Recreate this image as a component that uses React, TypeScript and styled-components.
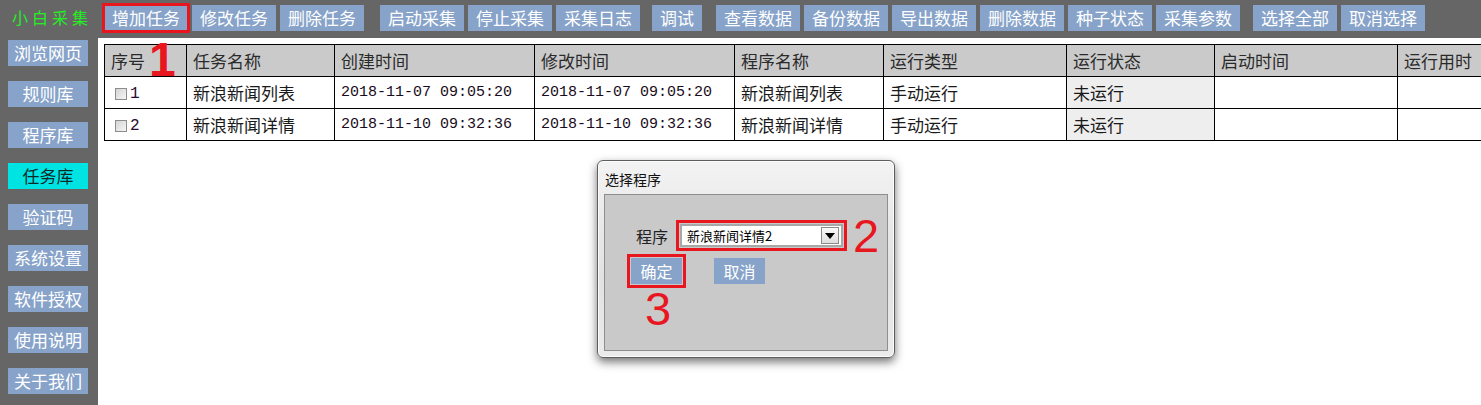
import React from "react";
import styled, { createGlobalStyle } from "styled-components";

const GlobalStyle = createGlobalStyle`
  html, body { margin: 0; padding: 0; background: #666666; }
  body { font-family: "Noto Sans CJK SC", "Liberation Sans", sans-serif; }
  * { box-sizing: border-box; }
`;

const CJK = `"Noto Sans CJK SC", "Liberation Sans", sans-serif`;
const RED = "#e8161f";

const Page = styled.div`
  position: relative;
  width: 1481px;
  height: 405px;
  display: grid;
  grid-template-columns: 98px 1fr;
  grid-template-rows: 38px 1fr;
  background: #666666;
  overflow: hidden;
`;

const Logo = styled.div`
  display: flex;
  align-items: center;
  padding: 0 0 4px 12px;
  color: #22f022;
  font-family: ${CJK};
  font-size: 16px;
  letter-spacing: 4px;
  white-space: nowrap;
`;

const Toolbar = styled.div`
  display: flex;
  align-items: flex-start;
  padding: 5px 0 0 6px;
`;

const Group = styled.div<{ $ml: number }>`
  display: flex;
  gap: 4px;
  margin-left: ${(p) => p.$ml}px;
`;

const BlueButton = styled.button<{ $marked?: boolean; $w?: number }>`
  height: 26px;
  width: ${(p) => p.$w ?? 84}px;
  padding: 0;
  border: none;
  background: #87a3c9;
  color: #ffffff;
  font-family: ${CJK};
  font-size: 17px;
  line-height: 26px;
  text-align: center;
  white-space: nowrap;
  cursor: pointer;
  outline: ${(p) => (p.$marked ? `3px solid ${RED}` : "none")};
  outline-offset: -1px;
`;

const Sidebar = styled.nav`
  display: flex;
  flex-direction: column;
  align-items: flex-start;
  gap: 15px;
  padding: 2px 0 0 8px;
`;

const SideButton = styled.button<{ $active?: boolean }>`
  width: 80px;
  height: 26px;
  padding: 0;
  border: none;
  background: ${(p) => (p.$active ? "#00e3e3" : "#87a3c9")};
  color: ${(p) => (p.$active ? "#0c2a2a" : "#ffffff")};
  font-family: ${CJK};
  font-size: 17px;
  line-height: 26px;
  text-align: center;
  white-space: nowrap;
  cursor: pointer;
`;

const Main = styled.main`
  position: relative;
  background: #ffffff;
  padding: 6px 0 0 6px;
  overflow: hidden;
`;

const Table = styled.table`
  border-collapse: collapse;
  table-layout: fixed;
  width: 1476px;
  font-family: ${CJK};
  font-size: 17px;
  color: #1a1a1a;
`;

const HeadCell = styled.th`
  height: 32px;
  padding: 0 0 0 6px;
  border: 1px solid #000;
  background: #cacaca;
  font-weight: 400;
  text-align: left;
  white-space: nowrap;
  color: #2a2a2a;
`;

const Cell = styled.td<{ $mono?: boolean; $shade?: boolean }>`
  height: 32px;
  padding: 0 0 0 6px;
  border: 1px solid #000;
  background: ${(p) => (p.$shade ? "#eeeeee" : "#ffffff")};
  white-space: nowrap;
  font-family: ${(p) => (p.$mono ? `"Liberation Mono", monospace` : CJK)};
  font-size: ${(p) => (p.$mono ? "15px" : "17px")};
  color: ${(p) => (p.$mono ? "#1a0a20" : "#1a1a1a")};
`;

const IndexCell = styled.span`
  display: inline-flex;
  align-items: center;
  font-family: "Liberation Mono", monospace;
  font-size: 16px;
  color: #2a0a30;
`;

const Check = styled.span`
  display: inline-block;
  width: 12px;
  height: 12px;
  margin: 0 3px 0 4px;
  border: 1px solid #8c8c8c;
  background: linear-gradient(135deg, #d4d4d4 0%, #f6f6f6 100%);
`;

const Annotation = styled.span<{ $size: number }>`
  position: absolute;
  color: ${RED};
  font-family: "Liberation Sans", sans-serif;
  font-size: ${(p) => p.$size}px;
  line-height: 0.75;
  pointer-events: none;
  z-index: 2;
`;

const StepOne = styled(Annotation)`
  left: 149px;
  top: 42px;
  font-weight: 700;
`;

const Dialog = styled.div`
  position: absolute;
  left: 499px;
  top: 122px;
  width: 298px;
  height: 198px;
  display: flex;
  flex-direction: column;
  border: 1px solid #5e5e5e;
  border-radius: 6px;
  background: linear-gradient(180deg, #f3f3f3 0%, #e9e9e9 30%, #e2e2e2 60%, #ebebeb 100%);
  box-shadow: 0 4px 10px rgba(0, 0, 0, 0.55), inset 0 0 0 1px rgba(255, 255, 255, 0.8);
  padding: 0 6px 6px 6px;
`;

const DialogTitle = styled.div`
  height: 33px;
  display: flex;
  align-items: center;
  padding: 2px 0 0 1px;
  font-family: ${CJK};
  font-size: 14px;
  color: #111;
`;

const DialogBody = styled.div`
  flex: 1;
  display: flex;
  flex-direction: column;
  gap: 3px;
  padding: 25px 0 0 0;
  background: #c9c9c9;
  border: 1px solid #8e8e8e;
`;

const FieldRow = styled.div`
  display: flex;
  align-items: center;
  padding-left: 31px;
`;

const FieldLabel = styled.span`
  width: 40px;
  font-family: ${CJK};
  font-size: 16px;
  color: #222;
`;

const Marker = styled.div`
  position: relative;
  display: flex;
  padding: 1px;
  border: 3px solid ${RED};
`;

const SelectBox = styled.div`
  width: 163px;
  height: 23px;
  display: flex;
  align-items: center;
  justify-content: space-between;
  padding: 0 2px 0 5px;
  background: #ffffff;
  border: 2px solid #a8a8a8;
  font-family: ${CJK};
  font-size: 13px;
  color: #000;
`;

const DropButton = styled.span`
  width: 18px;
  height: 17px;
  display: flex;
  align-items: center;
  justify-content: center;
  border: 1px solid #8a8a8a;
  background: linear-gradient(180deg, #fafafa, #dedede);
`;

const StepTwo = styled(Annotation)`
  left: calc(100% + 9px);
  top: -5px;
`;

const ButtonRow = styled.div`
  display: flex;
  align-items: center;
  gap: 28px;
  padding-left: 22px;
`;

const StepThree = styled(Annotation)`
  left: 15px;
  top: calc(100% + 6px);
`;

const DialogButton = styled(BlueButton)`
  width: 51px;
  font-size: 16px;
`;

const columns = [82, 148, 200, 200, 149, 183, 148, 183, 183];
const headers = ["序号", "任务名称", "创建时间", "修改时间", "程序名称", "运行类型", "运行状态", "启动时间", "运行用时"];

const rows = [
  { id: "1", name: "新浪新闻列表", created: "2018-11-07 09:05:20", modified: "2018-11-07 09:05:20", program: "新浪新闻列表" },
  { id: "2", name: "新浪新闻详情", created: "2018-11-10 09:32:36", modified: "2018-11-10 09:32:36", program: "新浪新闻详情" },
];

const groups: { ml: number; items: { label: string; w?: number; marked?: boolean }[] }[] = [
  { ml: 0, items: [{ label: "增加任务", marked: true }, { label: "修改任务" }, { label: "删除任务" }] },
  { ml: 16, items: [{ label: "启动采集" }, { label: "停止采集" }, { label: "采集日志" }] },
  { ml: 12, items: [{ label: "调试", w: 50 }] },
  { ml: 14, items: [{ label: "查看数据" }, { label: "备份数据" }, { label: "导出数据" }, { label: "删除数据" }, { label: "种子状态" }, { label: "采集参数" }] },
  { ml: 13, items: [{ label: "选择全部" }, { label: "取消选择" }] },
];

const sideItems = ["浏览网页", "规则库", "程序库", "任务库", "验证码", "系统设置", "软件授权", "使用说明", "关于我们"];

export default function App() {
  return (
    <>
      <GlobalStyle />
      <Page>
        <Logo>小白采集</Logo>
        <Toolbar>
          {groups.map((g, gi) => (
            <Group key={gi} $ml={g.ml}>
              {g.items.map((b) => (
                <BlueButton key={b.label} $w={b.w} $marked={b.marked}>
                  {b.label}
                </BlueButton>
              ))}
            </Group>
          ))}
        </Toolbar>
        <Sidebar>
          {sideItems.map((s) => (
            <SideButton key={s} $active={s === "任务库"}>
              {s}
            </SideButton>
          ))}
        </Sidebar>
        <Main>
          <Table>
            <colgroup>
              {columns.map((w, i) => (
                <col key={i} style={{ width: w }} />
              ))}
            </colgroup>
            <thead>
              <tr>
                {headers.map((h) => (
                  <HeadCell key={h}>{h}</HeadCell>
                ))}
              </tr>
            </thead>
            <tbody>
              {rows.map((r) => (
                <tr key={r.id}>
                  <Cell>
                    <IndexCell>
                      <Check />
                      {r.id}
                    </IndexCell>
                  </Cell>
                  <Cell>{r.name}</Cell>
                  <Cell $mono>{r.created}</Cell>
                  <Cell $mono>{r.modified}</Cell>
                  <Cell>{r.program}</Cell>
                  <Cell>手动运行</Cell>
                  <Cell $shade>未运行</Cell>
                  <Cell />
                  <Cell />
                </tr>
              ))}
            </tbody>
          </Table>

          <Dialog>
            <DialogTitle>选择程序</DialogTitle>
            <DialogBody>
              <FieldRow>
                <FieldLabel>程序</FieldLabel>
                <Marker>
                  <SelectBox>
                    <span>新浪新闻详情2</span>
                    <DropButton>
                      <svg width="10" height="6" viewBox="0 0 10 6">
                        <polygon points="0,0 10,0 5,6" fill="#000" />
                      </svg>
                    </DropButton>
                  </SelectBox>
                  <StepTwo $size={47}>2</StepTwo>
                </Marker>
              </FieldRow>
              <ButtonRow>
                <Marker>
                  <DialogButton as="span">确定</DialogButton>
                  <StepThree $size={47}>3</StepThree>
                </Marker>
                <DialogButton>取消</DialogButton>
              </ButtonRow>
            </DialogBody>
          </Dialog>
        </Main>
        <StepOne $size={48}>1</StepOne>
      </Page>
    </>
  );
}
